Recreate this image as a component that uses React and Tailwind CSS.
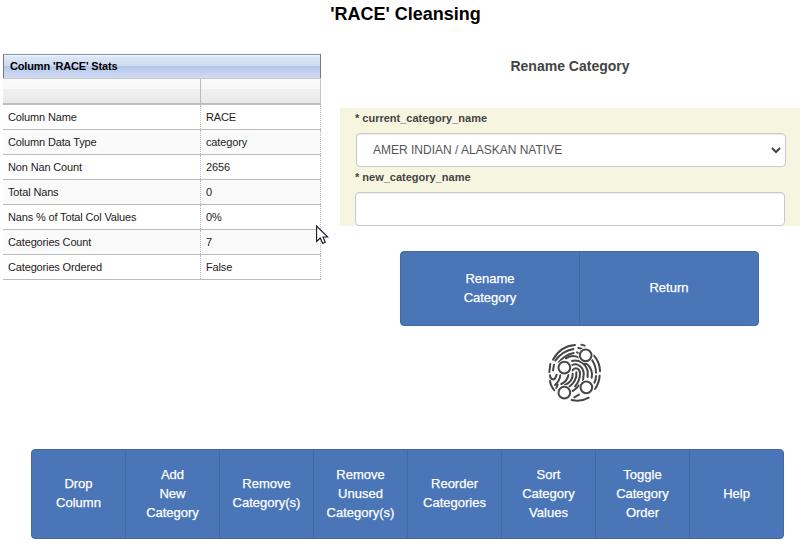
const stats = [
  ["Column Name", "RACE"],
  ["Column Data Type", "category"],
  ["Non Nan Count", "2656"],
  ["Total Nans", "0"],
  ["Nans % of Total Col Values", "0%"],
  ["Categories Count", "7"],
  ["Categories Ordered", "False"],
];

const actions = [
  ["Drop", "Column"],
  ["Add", "New", "Category"],
  ["Remove", "Category(s)"],
  ["Remove", "Unused", "Category(s)"],
  ["Reorder", "Categories"],
  ["Sort", "Category", "Values"],
  ["Toggle", "Category", "Order"],
  ["Help"],
];

function StatsTable() {
  return (
    <div className="w-[318px] text-[11px] leading-[13px] tracking-[-0.15px] text-[#222]">
      <div className="flex h-6 items-center border-x border-t border-x-[#777] border-t-[#7f93bd] bg-[linear-gradient(#f4f7fc_0,#dce6f5_2px,#cddaf0_11px,#b4c5ea_11px,#b9c9ec_13px,#cfdcf2_23px)] pl-1.5 font-bold text-black">
        Column 'RACE' Stats
      </div>
      <div className="flex h-[27px] border-t border-r border-b-2 border-t-[#c8c8c8] border-r-[#c4c4c4] border-b-[#bdbdbd] bg-[linear-gradient(#fafafa_0,#f8f8f8_10px,#eff0f1_10px,#e8e9ea_24px)]">
        <div className="w-[198px] border-r border-[#bbb]" />
      </div>
      {stats.map(([name, value], i) => (
        <div
          key={name}
          className={`flex h-[25px] border-b border-[#bbb] ${i % 2 ? "bg-[#fafafa]" : "bg-white"}`}
        >
          <div className="flex w-[198px] items-center border-r border-dotted border-[#bbb] pl-[5px]">{name}</div>
          <div className="flex flex-1 items-center border-r border-dotted border-[#bbb] pl-[5px]">{value}</div>
        </div>
      ))}
    </div>
  );
}

function ButtonBar({ items, className }) {
  return (
    <div className={`flex overflow-hidden rounded-[4px] border border-[#4069a6] bg-[#4a75b7] ${className}`}>
      {items.map((lines, i) => (
        <button
          key={i}
          className="flex flex-1 flex-col items-center justify-center border-r border-[#4069a6] pb-0.5 text-[13px] leading-[19px] text-white [-webkit-text-stroke:0.25px_white] last:border-r-0"
        >
          {lines.map((line) => (
            <span key={line}>{line}</span>
          ))}
        </button>
      ))}
    </div>
  );
}

function Fingerprint() {
  return (
    <svg viewBox="0 0 180 180" className="h-[60px] w-[60px] overflow-visible" fill="none" stroke="#464646" strokeWidth="6" strokeLinecap="round">
      <path d="M18 44C32 18 56 2 84 0M94 9L108 12M103 -1L113 2M141 32C152 45 159 62 159 79M158 92C157 107 152 121 144 132M125 158C110 167 92 169 74 165" />
      <path d="M10 57L7 81M21 59L18 76M25 47C38 29 56 16 79 12M35 52C48 36 61 28 80 24M134 44C143 56 147 69 147 83M147 93C147 101 145 108 142 113" />
      <path d="M57 40C70 32 87 31 101 41M90 22L97 26M112 53C125 58 135 72 135 88L134 98M75 48C95 41 117 57 122 79L122 96" />
      <path d="M9 91C9 105 22 107 26 97L29 89M9 108C10 119 15 128 22 136M40 91C38 105 33 112 24 120M32 119L28 129" />
      <path d="M72 62C91 50 111 68 110 88L108 107M76 76C86 63 99 73 99 85C99 100 95 112 84 124M88 82C91 100 79 118 63 128" />
      <path d="M77 86C78 101 69 114 52 121M64 90C62 104 54 112 43 117M71 140C81 137 89 130 96 121M82 157L96 149" />
      <g fill="#fff" stroke="#fff" strokeWidth="12">
        <circle cx="116" cy="31" r="17" />
        <circle cx="52" cy="68" r="17" />
        <circle cx="118" cy="127" r="17" />
        <circle cx="52" cy="143" r="17" />
      </g>
      <g fill="#fff">
        <circle cx="116" cy="31" r="17.5" />
        <circle cx="52" cy="68" r="17.5" />
        <circle cx="118" cy="127" r="17.5" />
        <circle cx="52" cy="143" r="17.5" />
      </g>
    </svg>
  );
}

export default function App() {
  return (
    <div className="relative h-[544px] w-[809px] overflow-hidden bg-white font-['Liberation_Sans',Arial,sans-serif]">
      <h1 className="h-[54px] w-[811px] pt-0.5 text-center text-lg leading-6 font-bold text-black">'RACE' Cleansing</h1>
      <div className="flex h-[395px] pl-[3px]">
        <StatsTable />
        <div className="ml-[19px] w-[460px]">
          <h2 className="h-[54px] pt-1 text-center text-sm leading-4 font-bold text-[#444]">Rename Category</h2>
          <form className="flex h-[118px] flex-col bg-[#f6f5e0] pl-[15px] text-[11px] font-bold text-[#444]">
            <label className="h-[25px] pt-1 leading-[13px]">* current_category_name</label>
            <div className="ml-px flex h-[34px] w-[430px] items-center justify-between rounded-[4px] border border-[#c8c8cd] bg-white pr-1 pl-4 text-xs font-normal text-[#555] shadow-[inset_0_1px_1px_rgba(0,0,0,0.075)]">
              <span>AMER INDIAN / ALASKAN NATIVE</span>
              <svg className="h-2.5 w-2.5" viewBox="0 0 10 10" fill="none" stroke="#444" strokeWidth="2">
                <path d="M1 3L5 7L9 3" />
              </svg>
            </div>
            <label className="h-[25px] pt-1 leading-[13px]">* new_category_name</label>
            <input className="h-[34px] w-[430px] rounded-[4px] border border-[#c8c8cd] bg-white shadow-[inset_0_1px_1px_rgba(0,0,0,0.075)]" />
          </form>
          <ButtonBar items={[["Rename", "Category"], ["Return"]]} className="mt-[25px] ml-[60px] h-[75px] w-[359px]" />
          <div className="mt-[19px] ml-[207px]">
            <Fingerprint />
          </div>
        </div>
      </div>
      <ButtonBar items={actions} className="ml-[31px] h-[90px] w-[753px]" />
      <svg className="absolute top-[225px] left-[316px] h-[20px] w-[13px]" viewBox="0 0 13 20" fill="#fff" stroke="#111827" strokeWidth="1.1">
        <path d="M.6 1V16.5L4.3 13L6.7 18.5L9.3 17.3L7 12H11.8Z" />
      </svg>
    </div>
  );
}
